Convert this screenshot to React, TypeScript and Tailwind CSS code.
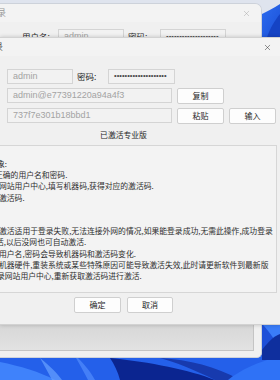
import { X } from 'lucide-react'

const CJK = { fontFamily: '"Noto Sans CJK SC", "Noto Sans", sans-serif' }
const LATIN = { fontFamily: '"Liberation Sans", Arial, sans-serif' }

// Lines of the help text; the box is wider than the window, so the first glyphs are cut.
const HELP_LINES = [
  { text: '象:', cls: 'ml-[3px]' },
  { text: '正确的用户名和密码.', cls: 'ml-[1px]' },
  { text: '网站用户中心,填写机器码,获得对应的激活码.', cls: 'ml-[5px]' },
  { text: '激活码.', cls: 'ml-[5px]' },
  { text: '', cls: '' },
  { text: '', cls: '' },
  { text: '激活适用于登录失败,无法连接外网的情况,如果能登录成功,无需此操作,成功登录', cls: 'ml-[5px]' },
  { text: '活,以后没网也可自动激活.', cls: 'ml-[2px]' },
  { text: '用户名,密码会导致机器码和激活码变化.', cls: 'ml-[5px]' },
  { text: '机器硬件,重装系统或某些特殊原因可能导致激活失效,此时请更新软件到最新版', cls: 'ml-[5px]' },
  { text: '录网站用户中心,重新获取激活码进行激活.', cls: 'ml-[3px]' },
]

function Wallpaper() {
  return (
    <svg className="absolute inset-0" width="280" height="380" viewBox="0 0 280 380">
      <defs>
        <linearGradient id="bl" x1="0" y1="0" x2="1" y2="1">
          <stop offset="0" stopColor="#2f6ff2" />
          <stop offset="1" stopColor="#1a4fd6" />
        </linearGradient>
      </defs>
      <rect width="280" height="380" fill="#1d4fd8" />
      <rect width="280" height="40" fill="#dfe4ee" />
      <path d="M258 16 C266 12 274 8 280 4 L280 40 L258 40 Z" fill="url(#bl)" />
      <path d="M266 40 C270 28 275 20 280 14 L280 40 Z" fill="#1543c4" />
      {/* bottom swirls */}
      <path d="M0 356 L280 356 L280 380 L0 380 Z" fill="#2460ea" />
      <path d="M110 358 C150 362 190 370 215 380 L120 380 C118 372 114 364 110 358 Z" fill="#0b2590" />
      <path d="M160 358 C190 360 215 366 240 380 L215 380 C195 370 175 362 160 358 Z" fill="#173aae" />
      <path d="M0 362 C20 366 40 372 55 380 L0 380 Z" fill="#3f82fb" />
      <path d="M40 358 C50 366 58 374 62 380 L52 380 C48 372 44 365 40 358 Z" fill="#68a2ff" opacity="0.7" />
      <path d="M78 358 C86 366 92 374 95 380 L88 380 C84 372 80 365 76 358 Z" fill="#5a94ff" opacity="0.6" />
      <path d="M228 380 C240 370 258 362 280 356 L280 380 Z" fill="#2f72f6" />
      <path d="M262 324 C268 330 274 338 280 350 L280 324 Z" fill="#3a7cf8" />
      <path d="M262 350 C268 342 274 336 280 334 L280 360 L262 360 Z" fill="#0f2f9e" />
    </svg>
  )
}

function Field({ w, text, dots }: { w: string; text?: string; dots?: boolean }) {
  return (
    <div
      className={`${w} h-[15px] shrink-0 flex items-center pl-[5px] bg-[#f2f2f2] border border-[#d4d4d4] overflow-hidden`}
    >
      {dots ? (
        <span className="text-[7.5px] leading-none text-[#4a4a4a] tracking-[0px]" style={LATIN}>
          ••••••••••••••••••••
        </span>
      ) : (
        <span className="text-[9px] leading-none text-[#a3a3a3]" style={LATIN}>
          {text}
        </span>
      )}
    </div>
  )
}

function Btn({ label, w = 'w-[47px]' }: { label: string; w?: string }) {
  return (
    <div
      className={`${w} h-[16px] shrink-0 flex items-center justify-center bg-[#fdfdfd] border border-[#cfcfcf] rounded-[2px] text-[8px] text-[#262626]`}
      style={CJK}
    >
      {label}
    </div>
  )
}

export default function App() {
  return (
    <div className="relative w-[280px] h-[380px] overflow-hidden">
      <Wallpaper />

      {/* Back login window */}
      <div className="absolute left-0 top-[3px] w-[262px] h-[355px] bg-[#f0f0f0] rounded-tr-[7px] rounded-br-[5px] border-r border-b border-t border-[#cdd2da] overflow-hidden flex flex-col">
        <div className="h-[18px] flex items-center justify-between bg-[#f3f3f3]">
          <span className="-ml-[3px] text-[9px] text-[#9a9a9a]" style={CJK}>录</span>
          <X size={9} strokeWidth={1.2} className="text-[#a0a0a0] mr-[10px]" />
        </div>
        <div className="flex items-center mt-[7px] h-[15px]">
          <span className="ml-[22px] w-[36px] text-[8.5px] text-[#262626]" style={CJK}>用户名:</span>
          <Field w="w-[66px]" text="admin" />
          <span className="ml-[4px] w-[32px] text-[8.5px] text-[#262626]" style={CJK}>密码:</span>
          <Field w="w-[66px]" dots />
        </div>
        <div className="flex-1" />
        <div className="h-[28px] mr-[7px] mb-[6px] bg-gradient-to-b from-[#d6d6d6] to-[#e2e2e2] border-r border-b border-[#c4c4c4]" />
      </div>

      {/* Front activation dialog */}
      <div className="absolute left-0 top-[37px] w-[280px] h-[288px] bg-[#f0f0f0] border-t border-b border-[#d2d2d2] shadow-[0_0_4px_rgba(0,0,0,0.2)] overflow-hidden flex flex-col">
        <div className="h-[18px] shrink-0 flex items-center justify-between bg-[#f3f3f3]">
          <span className="-ml-[6px] text-[9px] text-[#555]" style={CJK}>录</span>
          <X size={9} strokeWidth={1.3} className="text-[#2a2a2a] mr-[8px]" />
        </div>

        <div className="flex flex-col pl-[7px] pt-[12px]">
          <div className="flex items-center h-[16px]">
            <Field w="w-[66px]" text="admin" />
            <span className="ml-[4px] w-[31px] text-[8.5px] text-[#262626]" style={CJK}>密码:</span>
            <Field w="w-[67px]" dots />
          </div>
          <div className="flex items-start gap-[5px] mt-[4px] h-[16px]">
            <Field w="w-[165px]" text="admin@e77391220a94a4f3" />
            <Btn label="复制" />
          </div>
          <div className="flex items-start gap-[5px] mt-[4px] h-[16px]">
            <Field w="w-[165px]" text="737f7e301b18bbd1" />
            <Btn label="粘贴" />
            <Btn label="输入" />
          </div>

          <div className="w-[233px] h-[18px] mt-[2px] flex items-center justify-center text-[7.8px] text-[#262626]" style={CJK}>
            已激活专业版
          </div>

          <div className="-ml-[14px] w-[284px] h-[148px] mt-[1px] bg-[#f3f3f3] border border-[#d6d6d6] pt-[12px] overflow-hidden">
            {HELP_LINES.map((line, i) => (
              <div
                key={i}
                className={`${line.cls} h-[11.2px] leading-[11.2px] text-[7.8px] text-[#2e2e2e] whitespace-nowrap`}
                style={CJK}
              >
                {line.text}
              </div>
            ))}
          </div>

          <div className="w-[233px] mt-[4px] flex justify-center gap-[6px]">
            <Btn label="确定" />
            <Btn label="取消" w="w-[46px]" />
          </div>
        </div>
      </div>
    </div>
  )
}
